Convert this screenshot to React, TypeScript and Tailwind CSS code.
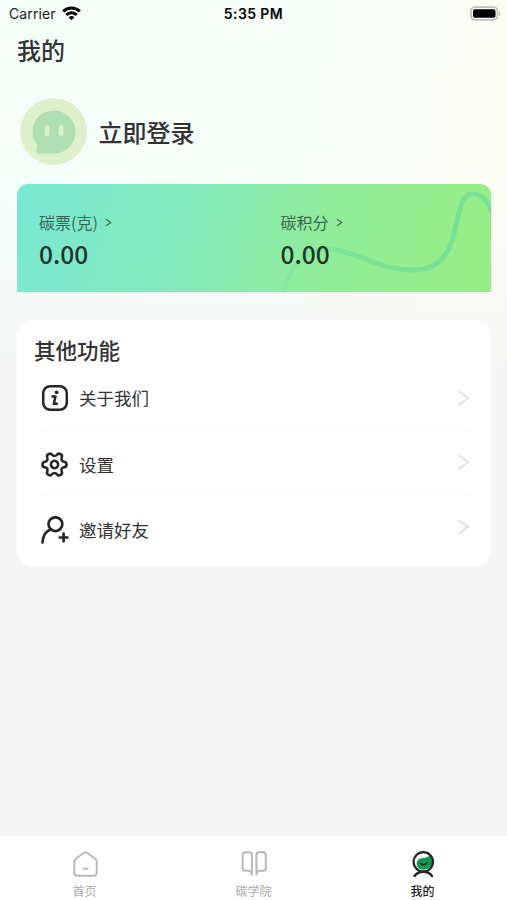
import type { ReactNode } from "react";
import { Settings } from "lucide-react";

const StatusBar = () => (
  <header className="grid h-[26px] grid-cols-3 items-center pl-[9px] pr-[6px] font-['Inter'] text-[14px] text-[#1c1c1c]">
    <div className="flex items-center gap-[6px]">
      <span className="tracking-[0.1px]">Carrier</span>
      <svg width="19" height="15" viewBox="0 0 19 15" fill="none" stroke="#000" strokeWidth="2.9">
        <path d="M1.2 5.4a11.8 11.8 0 0 1 16.6 0" />
        <path d="M4.3 8.9a7.4 7.4 0 0 1 10.4 0" />
        <path d="M9.5 14.3 6.6 11.3a4.2 4.2 0 0 1 5.8 0z" fill="#000" stroke="none" />
      </svg>
    </div>
    <span className="-ml-[3px] text-center font-semibold tracking-[0.4px] text-black">5:35 PM</span>
    <svg className="justify-self-end" width="32" height="15" viewBox="0 0 32 15">
      <rect x="2" y="1.2" width="26.5" height="12.6" rx="4" fill="#fff" stroke="#c2bfb9" strokeWidth="1.8" />
      <rect x="4" y="3.2" width="22.5" height="8.6" rx="1.8" fill="#000" />
      <path d="M30 5.3c1.6.6 1.6 3.8 0 4.4z" fill="#b5b2ac" />
    </svg>
  </header>
);

const Avatar = () => (
  <svg width="72" height="72" viewBox="0 0 72 72">
    <circle cx="36.5" cy="36.5" r="35.5" fill="#fff" fillOpacity="0.75" />
    <circle cx="36.5" cy="36.5" r="33.5" fill="#dcf1ca" />
    <path d="M37 15.5a21 21 0 1 1 0 43H21.500q-2.300 0-2-2.200l.9-6.300A21 21 0 0 1 37 15.500z" fill="#afdfb2" />
    <rect x="27.8" y="30" width="4.6" height="11" rx="2.3" fill="#dcf1ca" />
    <rect x="41.8" y="30" width="4.6" height="11" rx="2.3" fill="#dcf1ca" />
  </svg>
);

const Balance = ({ label, value }: { label: string; value: string }) => (
  <div className="relative w-[241.5px] shrink-0">
    <div className="flex h-6 items-center gap-[7px] text-[16px] text-[#2f4a3e]/85">
      <span>{label}</span>
      <svg className="mt-px" width="7" height="9" viewBox="0 0 7 9" fill="none" stroke="currentColor" strokeWidth="1.1">
        <path d="M1 1.2 5.8 4.5 1 7.8" />
      </svg>
    </div>
    <div className="mt-[4px] text-[24.5px] leading-[32px] font-medium text-[#24332c]">{value}</div>
  </div>
);

const InfoIcon = () => (
  <svg width="28" height="28" viewBox="0 0 28 28" fill="none" stroke="#252525" strokeWidth="2.5">
    <rect x="2.2" y="2.2" width="23.6" height="23.6" rx="7" />
    <path d="M11.5 12.4h3l-1.7 7.4h3" strokeWidth="2.5" strokeLinecap="round" strokeLinejoin="round" />
    <circle cx="15.6" cy="8.3" r="1.9" fill="#252525" stroke="none" />
  </svg>
);

const InviteIcon = () => (
  <svg width="28" height="28" viewBox="0 0 28 28" fill="none" stroke="#252525" strokeWidth="2.7" strokeLinecap="round">
    <circle cx="14.4" cy="8.2" r="6.9" />
    <path d="M1.500 26.500c.3-6.600 3.700-11.500 8.600-13.200M22.600 17.700v7.600M18.800 21.500h7.600" />
  </svg>
);

const MenuRow = ({ icon, label, arrow }: { icon: ReactNode; label: string; arrow: string }) => (
  <div className="flex h-7 items-center">
    <span className="flex w-7 justify-center">{icon}</span>
    <span className="ml-[10.5px] flex-1 text-[17.5px] leading-6 text-[#333]">{label}</span>
    <svg className={arrow} width="13" height="16" viewBox="0 0 13 16" fill="none" stroke="#d8d8d8" strokeWidth="1.5">
      <path d="M1.2 1 11.2 8 1.2 15" />
    </svg>
  </div>
);

const Tab = ({ icon, label, active }: { icon: ReactNode; label: string; active?: boolean }) => (
  <button className={active ? "flex flex-1 flex-col items-center text-[#1d1d1d]" : "flex flex-1 flex-col items-center text-[#aaa]"}>
    {icon}
    <span className={active ? "mt-[5px] text-[12px] leading-4 font-medium" : "mt-[5px] text-[12px] leading-4"}>{label}</span>
  </button>
);

const HomeIcon = () => (
  <svg width="28" height="28" viewBox="0 0 28 28" fill="none" stroke="#b9b9b9" strokeWidth="2" strokeLinejoin="round">
    <path d="M12.8 2.8 4.5 9q-1.2.9-1.2 2.4v11.4q0 3 3 3h16.4q3 0 3-3V11.400q0-1.500-1.200-2.400l-8.300-6.200q-1.700-1.200-3.400 0z" />
    <path d="M11.5 18.7h6" />
  </svg>
);

const BookIcon = () => (
  <svg width="28" height="28" viewBox="0 0 28 28" fill="none" stroke="#b9b9b9" strokeWidth="2" strokeLinejoin="round">
    <path d="M12 24.8V4.8q0-2.600-2.600-2.600H5.200q-2.600 0-2.600 2.600v13.400q0 2.600 2.600 2.600h3.400q3.400.4 3.400 4z" />
    <path d="M16.4 24.8V4.8q0-2.600 2.600-2.600h4.200q2.600 0 2.600 2.600v13.400q0 2.600-2.600 2.600h-3.400q-3.400.4-3.400 4z" />
  </svg>
);

const MineIcon = () => (
  <svg width="28" height="28" viewBox="0 0 28 28" fill="none" stroke="#252525" strokeWidth="2.2" strokeLinecap="round">
    <path d="M21.2 4.500c3 4 3 9-.2 12.500-3 3-8 3.500-11 1.500-3.400-2.600-3-8 .8-9.800 3.700-1.700 8.200-.2 10.400-4.200z" fill="#109a4e" stroke="none" />
    <circle cx="14.3" cy="11.8" r="9.7" />
    <path d="M11.8 13.400c1.500 1.900 4.700 1.700 6-.6" strokeWidth="1.6" />
    <path d="M5.600 26c1.500-2.300 4.700-4.300 8.700-4.300s7.200 2 8.700 4.300" strokeWidth="2.5" />
  </svg>
);

export default function App() {
  return (
    <div className="flex h-[900px] w-[507px] flex-col overflow-hidden bg-[#f5f5f5] bg-[linear-gradient(to_bottom,rgba(245,245,245,0)_0px,rgba(245,245,245,0)_170px,#f5f5f5_400px),linear-gradient(100deg,#f3fef9_0%,#f6fef9_45%,#fcfdf7_72%,#fffaf4_100%)] font-['Noto_Sans_CJK_SC',sans-serif]">
      <StatusBar />

      <main className="flex-1 px-[17px]">
        <h1 className="mt-[8px] text-[24px] leading-8 font-medium text-[#333]">我的</h1>

        <div className="mt-[29px] flex items-center gap-[9.5px]">
          <Avatar />
          <span className="mt-px text-[24px] leading-8 font-medium text-[#333]">立即登录</span>
        </div>

        {/* Balance card */}
        <section className="relative mt-[17px] flex h-[108px] w-[473.5px] overflow-hidden rounded-t-[11px] bg-[linear-gradient(103deg,#79e8d3_0%,#84eab9_38%,#90ed98_65%,#97ee83_100%)] pt-[26px] pl-[22px]">
          <svg className="absolute top-0 left-0" width="474" height="108" viewBox="0 0 474 108" fill="none">
            <defs>
              <linearGradient id="wave" x1="264" y1="0" x2="474" y2="0" gradientUnits="userSpaceOnUse">
                <stop offset="0" stopColor="#70dfa0" stopOpacity="0.25" />
                <stop offset="0.5" stopColor="#70df92" stopOpacity="0.8" />
                <stop offset="1" stopColor="#74e196" />
              </linearGradient>
            </defs>
            <path d="M266 109C275 75 295 61 321 66C345 71 365 86 395 86C453 87 430 10 456 10C466 10 471 18 477 32" stroke="url(#wave)" strokeWidth="5" />
          </svg>
          <Balance label="碳票(克)" value="0.00" />
          <Balance label="碳积分" value="0.00" />
        </section>

        {/* Other features */}
        <section className="mt-[28px] h-[247px] w-[473.5px] rounded-[16px] bg-white pr-[21px] pl-[17px]">
          <h2 className="pt-[14px] text-[21.5px] leading-[32px] font-medium text-[#333]">其他功能</h2>
          <div className="ml-[6.5px] divide-y divide-[#f7f7f7]">
            <div className="h-[65px] pt-[17.5px]">
              <MenuRow icon={<InfoIcon />} label="关于我们" arrow="" />
            </div>
            <div className="h-[64px] pt-[19.5px]">
              <MenuRow
                icon={<Settings className="shrink-0 rotate-30" size={29} stroke="#252525" strokeWidth={2.1} />}
                label="设置"
                arrow="-mt-[6px]"
              />
            </div>
            <div className="h-[64px] pt-[21px]">
              <MenuRow icon={<InviteIcon />} label="邀请好友" arrow="-mt-[7px]" />
            </div>
          </div>
        </section>
      </main>

      <nav className="flex h-[64px] items-start bg-white pt-[14px]">
        <Tab icon={<HomeIcon />} label="首页" />
        <Tab icon={<BookIcon />} label="碳学院" />
        <Tab icon={<MineIcon />} label="我的" active />
      </nav>
    </div>
  );
}
